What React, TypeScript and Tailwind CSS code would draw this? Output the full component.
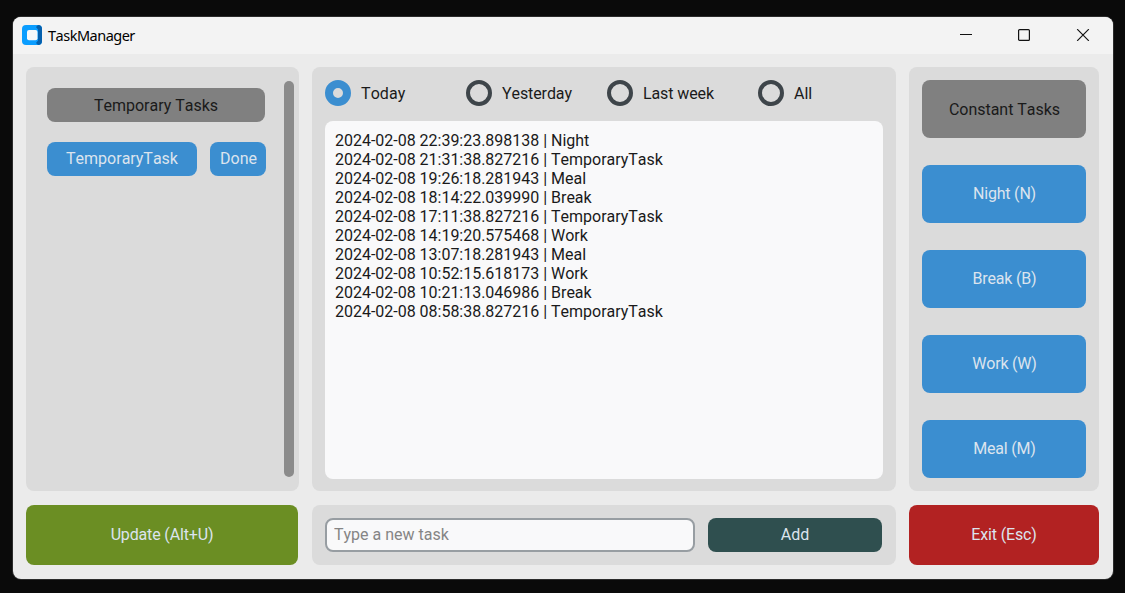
import { useState } from "react";

const logs = [
  "2024-02-08 22:39:23.898138 | Night",
  "2024-02-08 21:31:38.827216 | TemporaryTask",
  "2024-02-08 19:26:18.281943 | Meal",
  "2024-02-08 18:14:22.039990 | Break",
  "2024-02-08 17:11:38.827216 | TemporaryTask",
  "2024-02-08 14:19:20.575468 | Work",
  "2024-02-08 13:07:18.281943 | Meal",
  "2024-02-08 10:52:15.618173 | Work",
  "2024-02-08 10:21:13.046986 | Break",
  "2024-02-08 08:58:38.827216 | TemporaryTask",
];

const ranges = [
  { label: "Today", width: "w-[141px]", tracking: "tracking-[0.1px]" },
  { label: "Yesterday", width: "w-[141px]", tracking: "tracking-[-0.1px]" },
  { label: "Last week", width: "w-[151px]", tracking: "tracking-[-0.1px]" },
  { label: "All", width: "w-[80px]", tracking: "tracking-normal" },
];

const constantTasks = ["Night (N)", "Break (B)", "Work (W)", "Meal (M)"];

function TitleBar() {
  return (
    <header className="flex h-[37px] shrink-0 items-center bg-[#f3f3f3] pb-px pl-[9px] pr-[23px]">
      <svg width="20" height="20" viewBox="0 0 20 20">
        <rect width="20" height="20" rx="4" fill="#0a9dff" />
        <path d="M16 0a4 4 0 0 1 4 4v12a4 4 0 0 1-4 4l-2-2 2-2.500V4.500L14 2z" fill="#0560ad" />
        <rect x="5" y="5" width="10.500" height="10.300" rx="2" fill="#f6f8fa" />
      </svg>
      <h1 className="ml-[6px] pb-px font-['Noto_Sans',sans-serif] text-[14.500px] leading-5 tracking-[-0.5px] text-black">
        TaskManager
      </h1>
      <div className="ml-auto flex items-center gap-[46px] text-[#111]">
        <svg width="12" height="12" viewBox="0 0 12 12" stroke="currentColor">
          <path d="M0 5.500h12" />
        </svg>
        <svg width="12" height="12" viewBox="0 0 12 12" fill="none" stroke="currentColor" strokeWidth="1.200">
          <rect x="0.600" y="0.600" width="10.800" height="10.800" rx="1" />
        </svg>
        <svg width="14" height="12" viewBox="0 0 14 12" stroke="currentColor" strokeWidth="1.200">
          <path d="M1.200.200 12.800 11.800M12.800.200 1.200 11.800" />
        </svg>
      </div>
    </header>
  );
}

export default function App() {
  const [range, setRange] = useState("Today");
  const [task, setTask] = useState("");

  return (
    <div className="h-[593px] w-[1125px] overflow-hidden bg-[#0a0a0a] pl-[13px] pt-[17px] font-[Roboto,sans-serif] text-base leading-[19px] text-[#1a1a1a] [font-kerning:none]">
      <div className="flex h-[562px] w-[1100px] flex-col overflow-hidden rounded-lg bg-[#ebebeb] shadow-[0_0_0_1px_#2b2b2b]">
        <TitleBar />
        <main className="grid grid-cols-[273px_584px_190px] grid-rows-[424px_60px] gap-x-[13px] gap-y-[14px] p-[13px]">
          <section className="flex justify-between rounded-lg bg-[#dbdbdb] pb-[14px] pl-[21px] pr-[5px] pt-[14px]">
            <div className="flex flex-col gap-5 pt-[7px]">
              <h2 className="flex h-[34px] w-[218px] items-center justify-center rounded-lg bg-[#808080]">
                Temporary Tasks
              </h2>
              <div className="flex gap-[13px] text-[#dce4ee]">
                <button className="h-[34px] w-[150px] rounded-lg bg-[#3b8ed0] pb-[2px]">TemporaryTask</button>
                <button className="h-[34px] w-14 rounded-lg bg-[#3b8ed0] pb-[2px] pl-px">Done</button>
              </div>
            </div>
            <div className="w-[10px] rounded-full bg-[#8b8b8b]" />
          </section>

          <section className="flex flex-col rounded-lg bg-[#dbdbdb] px-[13px] pb-3 pt-[13px]">
            <div className="flex h-[26px]">
              {ranges.map(({ label, width, tracking }) => (
                <label key={label} className={`flex items-center gap-[10px] ${width} ${tracking}`}>
                  <input
                    type="radio"
                    name="range"
                    checked={range === label}
                    onChange={() => setRange(label)}
                    className="h-[26px] w-[26px] shrink-0 appearance-none rounded-full border-4 border-[#3e454a] checked:border-8 checked:border-[#3b8ed0]"
                  />
                  <span className="whitespace-nowrap">{label}</span>
                </label>
              ))}
            </div>
            <div className="mt-[15px] w-[558px] flex-1 rounded-lg bg-[#f9f9fa] px-[10px] pt-[10px] tracking-[-0.015px]">
              {logs.map((line) => (
                <p key={line} className="whitespace-pre">{line}</p>
              ))}
            </div>
          </section>

          <section className="flex flex-col gap-[27px] rounded-lg bg-[#dbdbdb] p-[13px]">
            <h2 className="flex h-[58px] w-[164px] items-center justify-center rounded-lg bg-[#808080] pl-px tracking-[-0.02px]">
              Constant Tasks
            </h2>
            {constantTasks.map((name) => (
              <button key={name} className="h-[58px] w-[164px] rounded-lg bg-[#3b8ed0] pb-[2px] pl-px tracking-[-0.2px] text-[#dce4ee]">
                {name}
              </button>
            ))}
          </section>

          <button className="w-[272px] rounded-lg bg-[#6b8e23] pb-[2px] tracking-[-0.15px] text-[#dce4ee]">Update (Alt+U)</button>

          <form className="flex gap-[13px] rounded-lg bg-[#dbdbdb] p-[13px]" onSubmit={(e) => e.preventDefault()}>
            <input
              value={task}
              onChange={(e) => setTask(e.target.value)}
              placeholder="Type a new task"
              className="h-[34px] w-[370px] rounded-lg border-2 border-[#979da2] bg-[#f9f9fa] px-[7px] pb-[2px] placeholder:text-[#858585]"
            />
            <button className="h-[34px] w-[174px] rounded-lg bg-[#2f4f4f] pb-[2px] text-[#dce4ee]">Add</button>
          </form>

          <button className="rounded-lg bg-[#b22222] pb-[2px] tracking-[-0.15px] text-[#dce4ee]">Exit (Esc)</button>
        </main>
      </div>
    </div>
  );
}
